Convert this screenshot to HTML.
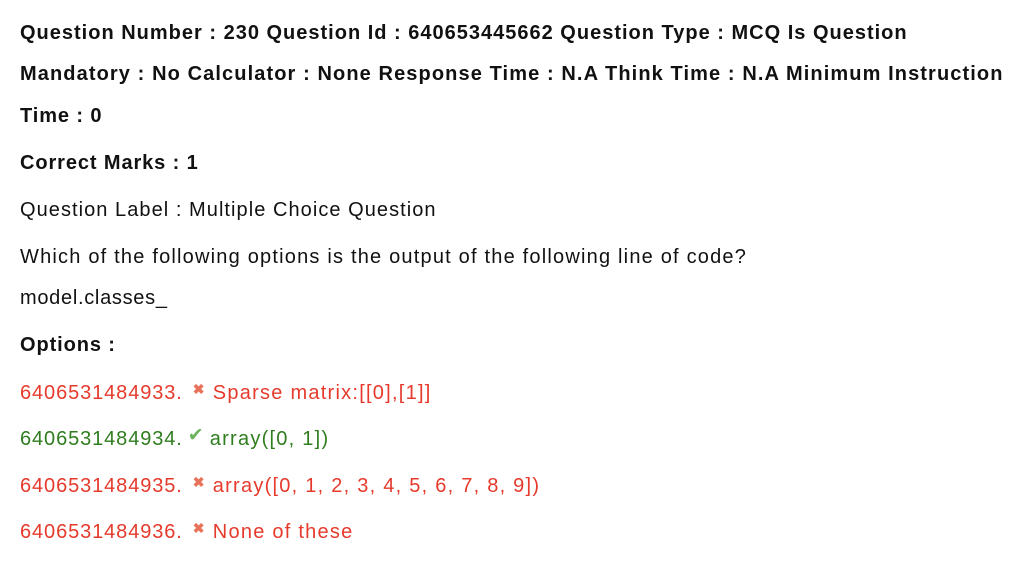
<!DOCTYPE html>
<html><head><meta charset="utf-8"><style>
body{margin:0;width:1020px;height:574px;background:#fff;font-family:"Liberation Sans",Arial,sans-serif;font-size:20px;color:#111;position:relative;overflow:hidden}
.l{position:absolute;left:20px;line-height:24px;white-space:nowrap;letter-spacing:0.9px}
.b{font-weight:bold}
.r{color:#e53a2c}.g{color:#2f7d1f}
.t{letter-spacing:1.25px}
.x{display:inline-block;width:14px;font-size:14px;color:#e8735a;position:relative;top:-5px;margin:0 6px 0 10px;font-weight:bold;letter-spacing:0}
.c{display:inline-block;width:18px;font-size:19px;color:#6bb35a;position:relative;top:-4px;margin:0 4px 0 5px;letter-spacing:0}
</style></head><body>
<div class="l b" style="top:21px;letter-spacing:1.0px">Question Number : 230 Question Id : 640653445662 Question Type : MCQ Is Question</div>
<div class="l b" style="top:62px;letter-spacing:1.1px">Mandatory : No Calculator : None Response Time : N.A Think Time : N.A Minimum Instruction</div>
<div class="l b" style="top:104px">Time : 0</div>
<div class="l b" style="top:151px">Correct Marks : 1</div>
<div class="l" style="top:198px;letter-spacing:1.05px">Question Label : Multiple Choice Question</div>
<div class="l" style="top:245px;letter-spacing:1.2px">Which of the following options is the output of the following line of code?</div>
<div class="l" style="top:286px;letter-spacing:0.7px">model.classes_</div>
<div class="l b" style="top:333px">Options :</div>
<div class="l r" style="top:381px">6406531484933.<span class="x">✖</span><span class="t">Sparse matrix:[[0],[1]]</span></div>
<div class="l g" style="top:427px">6406531484934.<span class="c">✔</span><span class="t">array([0, 1])</span></div>
<div class="l r" style="top:474px">6406531484935.<span class="x">✖</span><span class="t">array([0, 1, 2, 3, 4, 5, 6, 7, 8, 9])</span></div>
<div class="l r" style="top:520px">6406531484936.<span class="x">✖</span><span class="t">None of these</span></div>
</body></html>
